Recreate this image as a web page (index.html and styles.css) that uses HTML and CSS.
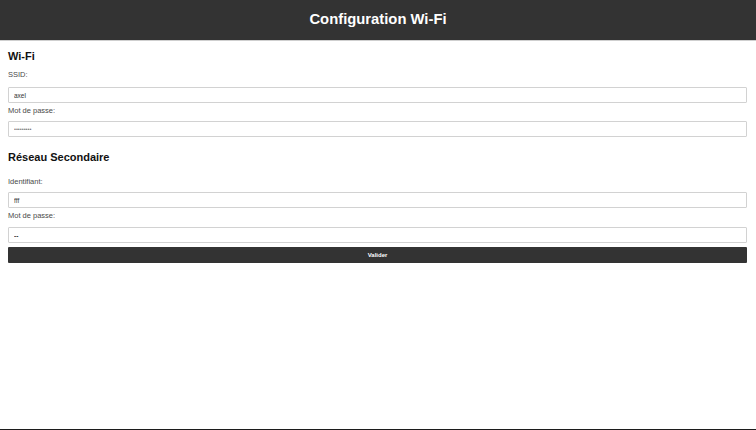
FILE: index.html
```html
<!DOCTYPE html>
<html lang="fr">
<head>
<meta charset="utf-8">
<title>Configuration Wi-Fi</title>
<link rel="stylesheet" href="styles.css">
</head>
<body>
<div class="page">
  <header class="topbar">
    <h1 class="title">Configuration Wi-Fi</h1>
  </header>
  <form class="form">
    <h2 class="section section-first">Wi-Fi</h2>
    <label class="label label-first" for="ssid">SSID:</label>
    <input class="field field-a" id="ssid" type="text" value="axel">
    <label class="label label-next" for="pass1">Mot de passe:</label>
    <input class="field field-b field-secret" id="pass1" type="password" value="123456789">
    <h2 class="section section-second">Réseau Secondaire</h2>
    <label class="label label-third" for="ident">Identifiant:</label>
    <input class="field field-c" id="ident" type="text" value="fff">
    <label class="label label-next" for="pass2">Mot de passe:</label>
    <input class="field field-d" id="pass2" type="text" value="--">
    <button class="submit" type="button">Valider</button>
  </form>
</div>
</body>
</html>
```
FILE: styles.css
```css
html, body {
  margin: 0;
  padding: 0;
  background: #ffffff;
}

body {
  font-family: "Liberation Sans", Arial, sans-serif;
  color: #111;
}

.page {
  box-sizing: border-box;
  height: 430px;
  border-bottom: 1px solid #1c1c1c;
  display: flex;
  flex-direction: column;
}

.topbar {
  height: 40px;
  background: #333333;
  border-bottom: 1px solid #cfcfcf;
  box-sizing: content-box;
  display: flex;
  justify-content: center;
}

.title {
  margin: 0;
  color: #ffffff;
  font-size: 14.8px;
  font-weight: bold;
  line-height: 38px;
  padding-bottom: 2px;
}

.form {
  display: flex;
  flex-direction: column;
  padding: 0 9px 0 8px;
}

.section {
  margin: 0;
  font-size: 11px;
  line-height: 14px;
  font-weight: bold;
  color: #111;
}

.section-first { margin-top: 8px; }
.section-second { margin-top: 13px; }

.label {
  font-size: 7.5px;
  line-height: 10px;
  color: #4a4a4a;
}

.label-first { margin-top: 7px; }
.label-next { margin-top: 3px; }
.label-third { margin-top: 12.5px; }

.field {
  box-sizing: border-box;
  height: 16px;
  width: 100%;
  margin: 0;
  padding: 0 5px;
  border: 1px solid #d2d2d2;
  border-radius: 1px;
  font-family: "Liberation Sans", Arial, sans-serif;
  font-size: 6.5px;
  color: #333;
  background: #fff;
  outline: none;
}

.field-secret {
  color: #777;
  font-size: 5.5px;
}

.field-a { margin-top: 7px; }
.field-b { margin-top: 5px; }
.field-c { margin-top: 5.5px; }
.field-d { margin-top: 6px; font-weight: bold; }

.submit {
  margin-top: 3.5px;
  height: 16px;
  width: 100%;
  border: none;
  border-radius: 1px;
  background: #333333;
  color: #ffffff;
  font-family: "Liberation Sans", Arial, sans-serif;
  font-size: 6px;
  font-weight: bold;
  padding: 0;
}
```
